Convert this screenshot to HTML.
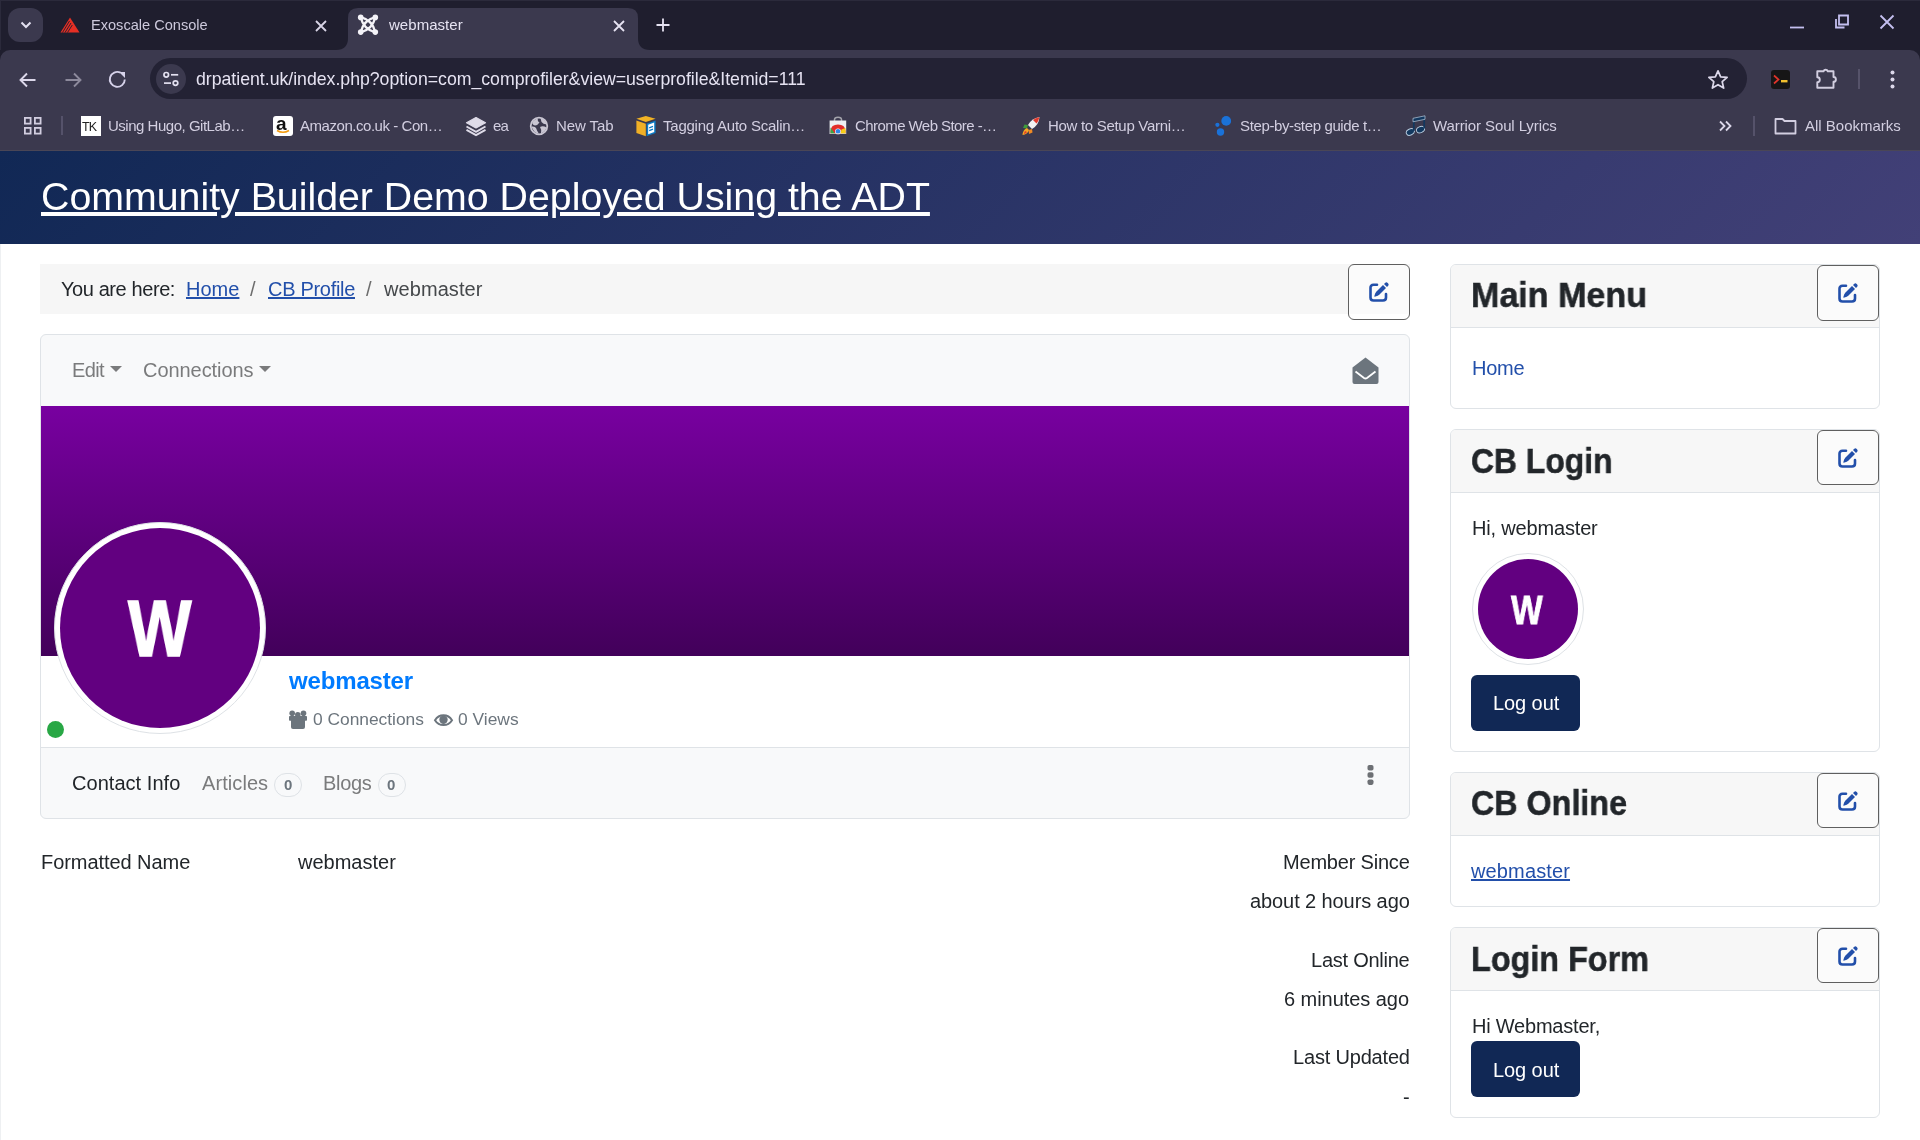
<!DOCTYPE html>
<html><head><meta charset="utf-8"><style>
html,body{margin:0;padding:0;width:1920px;height:1140px;overflow:hidden;background:#fff;}
body{position:relative;font-family:"Liberation Sans",sans-serif;}
.a{position:absolute;}
.t{position:absolute;line-height:1;white-space:pre;will-change:transform;}
svg{display:block;}
</style></head><body>
<div class="a" style="left:0px;top:0px;width:1920px;height:60px;background:#1f1e2e;"></div>
<div class="a" style="left:0px;top:50px;width:1920px;height:100px;background:#3b394e;border-radius:10px 10px 0 0;"></div>
<div class="a" style="left:0px;top:150px;width:1920px;height:1px;background:#4a4656;"></div>
<div class="a" style="left:8px;top:8px;width:35px;height:34px;background:#3b394e;border-radius:12px;"></div>
<div class="a" style="left:0px;top:0px;width:1920px;height:1px;background:#2b2a3b;"></div>
<div class="a" style="left:0px;top:0px;width:1px;height:50px;background:#2b2a3b;"></div>
<svg class="a" style="left:19px;top:19px" width="14" height="12" viewBox="0 0 14 12"><path d="M2.5 3.5 L7 8 L11.5 3.5" fill="none" stroke="#e3e0f0" stroke-width="2"/></svg>
<svg class="a" style="left:336px;top:7px" width="314" height="43" viewBox="0 0 314 43">
<path d="M0 43 Q12 43 12 31 L12 11 Q12 1 22 1 L292 1 Q302 1 302 11 L302 31 Q302 43 314 43 Z" fill="#3b394e"/></svg>
<svg class="a" style="left:60px;top:17px" width="20" height="16" viewBox="0 0 20 16">
<path d="M10 0.5 L19.5 15.5 L0.5 15.5 Z" fill="#e52f24"/>
<path d="M2.5 15.5 L9.5 4 M5 15.5 L11 6 M7.5 15.5 L12.3 8" stroke="#1f1e2e" stroke-width="0.9"/></svg>
<div class="t " style="left:90.50px;top:17.64px;font-size:14.6px;color:#cdc9dc;letter-spacing:-0.010px;">Exoscale Console</div>
<svg class="a" style="left:314px;top:19px" width="14" height="14" viewBox="0 0 14 14"><path d="M2 2 L12 12 M12 2 L2 12" stroke="#d8d4e6" stroke-width="1.8"/></svg>
<svg class="a" style="left:355px;top:13px" width="26" height="24" viewBox="0 0 26 24"><g fill="none" stroke="#f4f3f8" stroke-width="2.3"><path d="M5.7 4.2 Q17.6 7.3 20.3 19.3 M5.7 4.2 Q8.4 16.2 20.3 19.3 M20.3 4.2 Q17.6 16.2 5.7 19.3 M20.3 4.2 Q8.4 7.3 5.7 19.3"/></g><g fill="#f4f3f8"><circle cx="5.7" cy="4.4" r="2.8"/><circle cx="20.3" cy="4.4" r="2.8"/><circle cx="5.7" cy="19.1" r="2.8"/><circle cx="20.3" cy="19.1" r="2.8"/></g></svg>
<div class="t " style="left:388.50px;top:17.30px;font-size:15px;color:#e6e3f2;letter-spacing:0.038px;">webmaster</div>
<svg class="a" style="left:612px;top:19px" width="14" height="14" viewBox="0 0 14 14"><path d="M2 2 L12 12 M12 2 L2 12" stroke="#e6e3f2" stroke-width="1.8"/></svg>
<svg class="a" style="left:655px;top:17px" width="16" height="16" viewBox="0 0 16 16"><path d="M8 1.5 V14.5 M1.5 8 H14.5" stroke="#e6e3f2" stroke-width="1.8"/></svg>
<svg class="a" style="left:1786px;top:10px" width="114" height="24" viewBox="0 0 114 24"><path d="M4 17.5 H18" stroke="#c4bff0" stroke-width="1.8"/><path d="M50 9 V17.5 H58.5 M53 5.5 H62 V14.5 H53 Z" fill="none" stroke="#c4bff0" stroke-width="1.8"/><path d="M94.5 5.5 L107.5 18.5 M107.5 5.5 L94.5 18.5" stroke="#c4bff0" stroke-width="1.8"/></svg>
<svg class="a" style="left:17px;top:69px" width="22" height="22" viewBox="0 0 22 22"><path d="M18.5 11 H4 M10 4.5 L3.5 11 L10 17.5" fill="none" stroke="#dcd8ea" stroke-width="1.9"/></svg>
<svg class="a" style="left:62px;top:69px" width="22" height="22" viewBox="0 0 22 22"><path d="M3.5 11 H18 M12 4.5 L18.5 11 L12 17.5" fill="none" stroke="#8d8a9c" stroke-width="1.9"/></svg>
<svg class="a" style="left:106px;top:68px" width="22" height="22" viewBox="0 0 22 22"><path d="M18.8 11.5 A7.5 7.5 0 1 1 14.5 4.6" fill="none" stroke="#d6d2ea" stroke-width="1.9"/><path d="M13 4 H19 V10 Z" fill="#d6d2ea"/></svg>
<div class="a" style="left:150px;top:58px;width:1597px;height:41px;background:#232234;border-radius:21px;"></div>
<div class="a" style="left:156px;top:64px;width:30px;height:30px;border-radius:15px;background:#3b394e"></div>
<svg class="a" style="left:161px;top:69px" width="20" height="20" viewBox="0 0 20 20"><g fill="none" stroke="#e3e0f0" stroke-width="1.7"><circle cx="5.25" cy="5.8" r="2.3"/><path d="M10 5.8 H17.2"/><circle cx="14.5" cy="14.1" r="2.3"/><path d="M3 14.1 H10"/></g></svg>
<div class="t " style="left:196.00px;top:70.72px;font-size:17.7px;color:#e6e3f2;letter-spacing:-0.012px;">drpatient.uk/index.php?option=com_comprofiler&amp;view=userprofile&amp;Itemid=111</div>
<svg class="a" style="left:1707px;top:69px" width="22" height="21" viewBox="0 0 24 23"><path d="M12 2 L14.9 8.6 L22 9.2 L16.6 13.9 L18.2 20.9 L12 17.2 L5.8 20.9 L7.4 13.9 L2 9.2 L9.1 8.6 Z" fill="none" stroke="#dcd8ea" stroke-width="1.9" stroke-linejoin="round"/></svg>
<div class="a" style="left:1771px;top:70px;width:19px;height:19px;border-radius:3px;background:#161616;"></div>
<svg class="a" style="left:1771px;top:70px" width="19" height="19" viewBox="0 0 19 19"><path d="M3 5.5 L7.5 9.5 L3 13.5" fill="none" stroke="#e0342a" stroke-width="1.7"/><path d="M10 11.2 H16.5" stroke="#f2c12e" stroke-width="2.4"/></svg>
<svg class="a" style="left:1814px;top:66px" width="26" height="24" viewBox="0 0 26 24"><path d="M3.3 5.3 H9.5 A2.3 2.3 0 0 1 13.8 5.3 H19.5 V11 A2.3 2.3 0 0 1 19.5 15.8 V21.8 H3.3 V16.3 A2.4 2.4 0 0 0 3.3 11.3 Z" fill="none" stroke="#d2cee0" stroke-width="1.9" stroke-linejoin="round"/></svg>
<div class="a" style="left:1858px;top:69px;width:2px;height:20px;background:#56536a;"></div>
<svg class="a" style="left:1888px;top:69px" width="9" height="21" viewBox="0 0 9 21"><circle cx="4.5" cy="3.5" r="2" fill="#dcd8ea"/><circle cx="4.5" cy="10.5" r="2" fill="#dcd8ea"/><circle cx="4.5" cy="17.5" r="2" fill="#dcd8ea"/></svg>
<svg class="a" style="left:23.7px;top:116.6px" width="18" height="18" viewBox="0 0 18 18"><g fill="none" stroke="#d2cee0" stroke-width="1.8"><rect x="0.9" y="0.9" width="5.7" height="5.7"/><rect x="10.9" y="0.9" width="5.7" height="5.7"/><rect x="0.9" y="10.9" width="5.7" height="5.7"/><rect x="10.9" y="10.9" width="5.7" height="5.7"/></g></svg>
<div class="a" style="left:61px;top:116px;width:2px;height:19px;background:#55526a;"></div>
<div class="a" style="left:81px;top:116px;width:20px;height:20px;background:#fff;"></div>
<div class="t " style="left:82.00px;top:121.42px;font-size:12.5px;color:#222;letter-spacing:-1px;">TK</div>
<div class="t " style="left:108.30px;top:117.50px;font-size:15px;color:#d2cee0;letter-spacing:-0.485px;">Using Hugo, GitLab…</div>
<div class="a" style="left:273px;top:116px;width:20px;height:20px;background:#fff;border-radius:3px;"></div>
<div class="t " style="left:275.80px;top:113.92px;font-size:19px;color:#111;font-weight:700;">a</div>
<svg class="a" style="left:274px;top:129px" width="18" height="6" viewBox="0 0 18 6"><path d="M3 1.5 Q9 5 15 1.5" fill="none" stroke="#f39c12" stroke-width="1.6"/></svg>
<div class="t " style="left:300.00px;top:117.50px;font-size:15px;color:#d2cee0;letter-spacing:-0.458px;">Amazon.co.uk - Con…</div>
<svg class="a" style="left:465px;top:116px" width="22" height="21" viewBox="0 0 22 21"><path d="M11 1.5 L20.5 6.8 L11 12 L1.5 6.8 Z" fill="#dedbe8" stroke="#dedbe8" stroke-width="1.2" stroke-linejoin="round"/><g fill="none" stroke="#dedbe8" stroke-width="1.9" stroke-linejoin="round"><path d="M1.5 10.5 L11 15.8 L20.5 10.5"/><path d="M1.5 13.8 L11 19.2 L20.5 13.8"/></g></svg>
<div class="t " style="left:493.00px;top:117.50px;font-size:15px;color:#d2cee0;letter-spacing:-0.893px;">ea</div>
<svg class="a" style="left:529px;top:116px" width="20" height="20" viewBox="0 0 20 20"><circle cx="10" cy="10" r="8.3" fill="none" stroke="#c9c6d3" stroke-width="1.8"/><path d="M3 7 Q5 3 9 2.5 Q8 5 10.5 6.5 Q9 9 6 9.5 Q4 9 3 7Z M11 11 Q14 9.5 17.5 11.5 Q16 16 12 17.5 Q13 14 11 11Z" fill="#c9c6d3"/><path d="M2.5 10.5 Q6 10 7 12 Q8 15 10 17.8 Q4.5 17 2.5 10.5Z M11.5 2.3 Q16 3 17.7 8.5 Q14 8 12.5 6 Q12 4 11.5 2.3Z" fill="#c9c6d3"/></svg>
<div class="t " style="left:556.00px;top:117.50px;font-size:15px;color:#d2cee0;letter-spacing:-0.070px;">New Tab</div>
<svg class="a" style="left:630px;top:111px" width="30" height="30" viewBox="630 111 30 30"><path d="M636.4 118.7 L645.8 115.9 L655.6 118.7 L645.8 121.9Z" fill="#f2b324"/><path d="M636.4 120.5 L645.8 123.8 L645.8 136.3 L636.4 133Z" fill="#f0b026"/><path d="M646.6 123.8 L655.6 120.5 L655.6 133 L646.6 136.3Z" fill="#0b7cc6"/><path d="M648.2 124.8 L654.2 122.6 L654.2 132 L648.2 134.3Z" fill="#fff"/><path d="M649.2 127.8 L653 126.3 M649.2 130.7 L653 129.2" stroke="#0b7cc6" stroke-width="1.3"/></svg>
<div class="t " style="left:662.80px;top:117.50px;font-size:15px;color:#d2cee0;letter-spacing:-0.233px;">Tagging Auto Scalin…</div>
<svg class="a" style="left:826px;top:114px" width="24" height="24" viewBox="826 114 24 24"><path d="M834.5 121 V119.5 Q834.5 117.2 838 117.2 Q841.5 117.2 841.5 119.5 V121" fill="none" stroke="#a3a3ab" stroke-width="1.5"/><rect x="829.6" y="120.5" width="16.6" height="13.2" fill="#eef0f2"/><path d="M830.5 133.7 L830.5 131 Q831 124.6 838 124.6 Q845 124.6 845.5 131 L845.5 133.7Z" fill="#e2302a"/><path d="M830.5 133.7 V127.5 L835 133.7Z" fill="#3aa845"/><path d="M845.5 133.7 V128 L841.5 129.5 L840.5 133.7Z" fill="#f6cf16"/><circle cx="838" cy="131.4" r="2.9" fill="#fff"/><circle cx="838" cy="131.4" r="2.3" fill="#2f86e8"/><rect x="829.6" y="133.2" width="16.6" height="0.6" fill="#ddd"/></svg>
<div class="t " style="left:855.20px;top:117.50px;font-size:15px;color:#d2cee0;letter-spacing:-0.567px;">Chrome Web Store -…</div>
<svg class="a" style="left:1021px;top:116px" width="20" height="20" viewBox="0 0 20 20"><path d="M18.5 1 Q11 2 7 9 L11 13 Q18 9 18.5 1Z" fill="#f2f2f2"/><path d="M18.5 1 Q14.5 1.8 12 4 L15.5 7.5 Q17.8 5 18.5 1Z" fill="#e23b2e"/><path d="M7 9 L3.5 8.5 L2 12 L6 12.5 Z" fill="#3f9b3a"/><path d="M11 13 L11.5 16.5 L8 18 L7.5 14Z" fill="#f08a24"/><path d="M6 12 Q2 13.5 1.5 19 Q6.5 18.5 8 14Z" fill="#f5a623"/><path d="M4 15 Q3 17 3 18 Q5 17.5 6 16Z" fill="#e23b2e"/></svg>
<div class="t " style="left:1047.70px;top:117.50px;font-size:15px;color:#d2cee0;letter-spacing:-0.301px;">How to Setup Varni…</div>
<svg class="a" style="left:1212px;top:113px" width="24" height="24" viewBox="0 0 24 24"><circle cx="14.2" cy="7.9" r="4.9" fill="#1a72d9"/><circle cx="5.4" cy="11.8" r="2.1" fill="#1a72d9"/><circle cx="8.5" cy="19" r="3.7" fill="#1a72d9"/></svg>
<div class="t " style="left:1240.00px;top:117.50px;font-size:15px;color:#d2cee0;letter-spacing:-0.369px;">Step-by-step guide t…</div>
<svg class="a" style="left:1400px;top:111px" width="30" height="26" viewBox="1400 111 30 26"><g stroke="#b9cde0" stroke-width="0.9"><ellipse cx="1410.3" cy="132" rx="4.2" ry="3" transform="rotate(-25 1410.3 132)" fill="#12385f"/><ellipse cx="1420.5" cy="129.6" rx="4.2" ry="3" transform="rotate(-25 1420.5 129.6)" fill="#12385f"/></g><g fill="none" stroke="#12385f" stroke-width="1.7"><path d="M1413.8 131 V119 M1424.2 128.5 V116.8"/></g><path d="M1413 118.3 L1425 115.8 L1425 119.3 L1413 121.8Z" fill="#12385f" stroke="#b9cde0" stroke-width="0.7"/></svg>
<div class="t " style="left:1433.00px;top:117.50px;font-size:15px;color:#d2cee0;letter-spacing:-0.099px;">Warrior Soul Lyrics</div>
<svg class="a" style="left:1717px;top:119px" width="16" height="14" viewBox="0 0 16 14"><path d="M3 2.5 L7.5 7 L3 11.5 M9 2.5 L13.5 7 L9 11.5" fill="none" stroke="#dcd8ea" stroke-width="1.8"/></svg>
<div class="a" style="left:1753px;top:116px;width:2px;height:20px;background:#55526a;"></div>
<svg class="a" style="left:1774px;top:117px" width="23" height="18" viewBox="0 0 23 18"><path d="M1.5 2 H8.5 L10.5 4 H21.5 V16.5 H1.5 Z" fill="none" stroke="#d2cee0" stroke-width="1.8" stroke-linejoin="round"/></svg>
<div class="t " style="left:1805.30px;top:117.50px;font-size:15px;color:#d2cee0;">All Bookmarks</div>
<div class="a" style="left:0px;top:151px;width:1920px;height:989px;background:#fff;"></div>
<div class="a" style="left:0px;top:244px;width:1px;height:896px;background:#eef0f2;"></div>
<div class="a" style="left:0px;top:151px;width:1920px;height:93px;background:linear-gradient(135deg,#112855 0%,#424077 100%);"></div>
<div class="t " style="left:41.00px;top:177.03px;font-size:39.3px;color:#fff;text-decoration:underline;text-decoration-thickness:3.5px;text-underline-offset:2px;">Community Builder Demo Deployed Using the ADT</div>
<div class="a" style="left:40px;top:264px;width:1370px;height:50px;background:#f6f6f6;"></div>
<div class="t " style="left:60.50px;top:279.47px;font-size:20px;color:#22262a;letter-spacing:-0.412px;">You are here:</div>
<div class="t " style="left:185.50px;top:279.47px;font-size:20px;color:#224faa;letter-spacing:0.012px;text-decoration:underline;text-decoration-thickness:2px;text-underline-offset:1px;">Home</div>
<div class="t " style="left:249.50px;top:279.47px;font-size:20px;color:#6d6d6d;">/</div>
<div class="t " style="left:267.50px;top:279.47px;font-size:20px;color:#224faa;letter-spacing:-0.303px;text-decoration:underline;text-decoration-thickness:2px;text-underline-offset:1px;">CB Profile</div>
<div class="t " style="left:366.00px;top:279.47px;font-size:20px;color:#6d6d6d;">/</div>
<div class="t " style="left:383.50px;top:279.47px;font-size:20px;color:#45484b;letter-spacing:0.076px;">webmaster</div>
<div class="a" style="left:1348px;top:264px;width:62px;height:56px;background:rgba(255,255,255,0.55);border:1.3px solid #5f5f5f;border-radius:6px;box-sizing:border-box;"></div>
<svg class="a" style="left:1368.0px;top:281.0px" width="22" height="22" viewBox="0 0 22 22"><path d="M9 3.8 H5.5 Q2.5 3.8 2.5 6.8 V16.5 Q2.5 19.5 5.5 19.5 H15 Q18 19.5 18 16.5 V13" fill="none" stroke="#224faa" stroke-width="2.6" stroke-linecap="round"/><path d="M17.3 1.8 Q18.5 0.8 19.7 2 L20.2 2.5 Q21.2 3.7 20.2 4.8 L19 6 L16 3 Z" fill="#224faa"/><path d="M15 4 L18 7 L11.5 13.5 Q10 15 7.5 15.5 L6.3 15.7 L6.5 14.5 Q7 12 8.5 10.5 Z" fill="#224faa"/></svg>
<div class="a" style="left:40px;top:334px;width:1370px;height:485px;background:#f8f9fa;border:1px solid #dfe3e7;border-radius:6px;box-sizing:border-box;"></div>
<div class="t " style="left:72.00px;top:360.07px;font-size:20px;color:#7a7b7c;letter-spacing:-0.616px;">Edit</div>
<svg class="a" style="left:110px;top:366px" width="12" height="6" viewBox="0 0 12 6"><path d="M0 0 H12 L6 6Z" fill="#7a7b7c"/></svg>
<div class="t " style="left:142.50px;top:360.07px;font-size:20px;color:#7a7b7c;letter-spacing:-0.062px;">Connections</div>
<svg class="a" style="left:259px;top:366px" width="12" height="6" viewBox="0 0 12 6"><path d="M0 0 H12 L6 6Z" fill="#7a7b7c"/></svg>
<svg class="a" style="left:1351px;top:356px" width="29" height="29" viewBox="0 0 29 29"><path d="M14.5 1.5 L27.5 11.5 V26 Q27.5 28 25.5 28 H3.5 Q1.5 28 1.5 26 V11.5 Z" fill="#6c757d"/><path d="M4.5 15.5 L13 22 Q14.5 23 16 22 L24.5 15.5" fill="none" stroke="#fff" stroke-width="1.8"/></svg>
<div class="a" style="left:41px;top:406px;width:1368px;height:250px;background:linear-gradient(180deg,#7800a0 0%,#42005a 100%);"></div>
<div class="a" style="left:41px;top:656px;width:1368px;height:91px;background:#fff;"></div>
<div class="a" style="left:41px;top:747px;width:1368px;height:1px;background:#dfe3e7;"></div>
<div class="a" style="left:54px;top:522px;width:212px;height:212px;border-radius:50%;background:#fff;border:1px solid #dee2e6;box-sizing:border-box;"></div>
<div class="a" style="left:60px;top:528px;width:200px;height:200px;border-radius:50%;background:#620080;"></div>
<div class="t " style="left:127.80px;top:589.28px;font-size:80px;color:#fff;font-weight:700;transform:scaleX(0.84);transform-origin:0 0;-webkit-text-stroke:1.6px #fff;">W</div>
<div class="a" style="left:47.2px;top:721.2px;width:17.3px;height:17.3px;border-radius:50%;background:#28a745;"></div>
<div class="t " style="left:289.00px;top:668.68px;font-size:24px;color:#007bff;font-weight:700;letter-spacing:-0.155px;">webmaster</div>
<svg class="a" style="left:288px;top:710px" width="20" height="20" viewBox="0 0 20 20"><g fill="#6c757d"><circle cx="4.2" cy="3.2" r="2.8"/><circle cx="15.5" cy="3.2" r="2.8"/><circle cx="9.8" cy="4.8" r="2.8"/><rect x="1" y="6" width="18" height="4.8" rx="0.8"/><path d="M3 8 H17 L17 17 Q17 19 15 19 H5 Q3 19 3 17 Z"/></g></svg>
<div class="t " style="left:313.00px;top:710.77px;font-size:17.4px;color:#6c757d;letter-spacing:-0.019px;">0 Connections</div>
<svg class="a" style="left:433px;top:712px" width="21" height="16" viewBox="0 0 21 16"><path d="M10.5 3.2 Q16 3.2 19 8.2 Q16 13.1 10.5 13.1 Q5 13.1 2 8.2 Q5 3.2 10.5 3.2Z" fill="none" stroke="#6c757d" stroke-width="2"/><circle cx="10.5" cy="7.8" r="4.2" fill="#6c757d"/></svg>
<div class="t " style="left:458.00px;top:710.77px;font-size:17.4px;color:#6c757d;">0 Views</div>
<div class="t " style="left:72.00px;top:773.07px;font-size:20px;color:#212529;letter-spacing:0.038px;">Contact Info</div>
<div class="t " style="left:201.50px;top:773.07px;font-size:20px;color:#7a7b7c;letter-spacing:0.079px;">Articles</div>
<div class="a" style="left:274px;top:773px;width:28px;height:24px;border-radius:12px;border:1px solid #dee2e6;box-sizing:border-box;background:#f8f9fa;"></div>
<div class="t " style="left:283.50px;top:777.10px;font-size:15px;color:#6c757d;font-weight:700;">0</div>
<div class="t " style="left:322.90px;top:773.07px;font-size:20px;color:#7a7b7c;letter-spacing:-0.326px;">Blogs</div>
<div class="a" style="left:377.5px;top:773px;width:28px;height:24px;border-radius:12px;border:1px solid #dee2e6;box-sizing:border-box;background:#f8f9fa;"></div>
<div class="t " style="left:387.00px;top:777.10px;font-size:15px;color:#6c757d;font-weight:700;">0</div>
<svg class="a" style="left:1367px;top:764px" width="7" height="22" viewBox="0 0 7 22"><g fill="#6d7074"><rect x="0.5" y="1" width="6" height="5.5" rx="1.8"/><rect x="0.5" y="8.2" width="6" height="5.5" rx="1.8"/><rect x="0.5" y="15.4" width="6" height="5.5" rx="1.8"/></g></svg>
<div class="t " style="left:41.00px;top:851.82px;font-size:20px;color:#22262a;letter-spacing:-0.061px;">Formatted Name</div>
<div class="t " style="left:297.70px;top:851.82px;font-size:20px;color:#22262a;">webmaster</div>
<div class="t " style="right:510.70px;top:852.07px;font-size:20px;color:#22262a;letter-spacing:-0.195px;">Member Since</div>
<div class="t " style="right:510.59px;top:890.67px;font-size:20px;color:#22262a;letter-spacing:-0.091px;">about 2 hours ago</div>
<div class="t " style="right:510.74px;top:949.57px;font-size:20px;color:#22262a;letter-spacing:-0.243px;">Last Online</div>
<div class="t " style="right:510.55px;top:988.87px;font-size:20px;color:#22262a;letter-spacing:-0.049px;">6 minutes ago</div>
<div class="t " style="right:510.68px;top:1046.67px;font-size:20px;color:#22262a;letter-spacing:-0.181px;">Last Updated</div>
<div class="t " style="right:510.50px;top:1086.57px;font-size:20px;color:#22262a;">-</div>
<div class="a" style="left:1450px;top:264px;width:430px;height:145px;background:#fff;border:1px solid #dfe3e7;border-radius:6px;box-sizing:border-box;"></div>
<div class="a" style="left:1451px;top:265px;width:428px;height:62px;background:#f7f7f7;border-radius:5px 5px 0 0;"></div>
<div class="a" style="left:1451px;top:327px;width:428px;height:1px;background:#dfe3e7;"></div>
<div class="t " style="left:1471.00px;top:277.17px;font-size:35px;color:#22262a;font-weight:700;-webkit-text-stroke:0.5px #22262a;transform:scaleX(0.9733);transform-origin:0 0;">Main Menu</div>
<div class="a" style="left:1817px;top:265px;width:62px;height:56px;background:rgba(255,255,255,0.55);border:1.3px solid #5f5f5f;border-radius:6px;box-sizing:border-box;"></div>
<svg class="a" style="left:1837.0px;top:282.0px" width="22" height="22" viewBox="0 0 22 22"><path d="M9 3.8 H5.5 Q2.5 3.8 2.5 6.8 V16.5 Q2.5 19.5 5.5 19.5 H15 Q18 19.5 18 16.5 V13" fill="none" stroke="#224faa" stroke-width="2.6" stroke-linecap="round"/><path d="M17.3 1.8 Q18.5 0.8 19.7 2 L20.2 2.5 Q21.2 3.7 20.2 4.8 L19 6 L16 3 Z" fill="#224faa"/><path d="M15 4 L18 7 L11.5 13.5 Q10 15 7.5 15.5 L6.3 15.7 L6.5 14.5 Q7 12 8.5 10.5 Z" fill="#224faa"/></svg>
<div class="t " style="left:1472.00px;top:357.97px;font-size:20px;color:#224faa;letter-spacing:-0.263px;">Home</div>
<div class="a" style="left:1450px;top:429px;width:430px;height:323px;background:#fff;border:1px solid #dfe3e7;border-radius:6px;box-sizing:border-box;"></div>
<div class="a" style="left:1451px;top:430px;width:428px;height:62px;background:#f7f7f7;border-radius:5px 5px 0 0;"></div>
<div class="a" style="left:1451px;top:492px;width:428px;height:1px;background:#dfe3e7;"></div>
<div class="t " style="left:1471.00px;top:442.57px;font-size:35px;color:#22262a;font-weight:700;-webkit-text-stroke:0.5px #22262a;transform:scaleX(0.9098);transform-origin:0 0;">CB Login</div>
<div class="a" style="left:1817px;top:430px;width:62px;height:55px;background:rgba(255,255,255,0.55);border:1.3px solid #5f5f5f;border-radius:6px;box-sizing:border-box;"></div>
<svg class="a" style="left:1837.0px;top:446.5px" width="22" height="22" viewBox="0 0 22 22"><path d="M9 3.8 H5.5 Q2.5 3.8 2.5 6.8 V16.5 Q2.5 19.5 5.5 19.5 H15 Q18 19.5 18 16.5 V13" fill="none" stroke="#224faa" stroke-width="2.6" stroke-linecap="round"/><path d="M17.3 1.8 Q18.5 0.8 19.7 2 L20.2 2.5 Q21.2 3.7 20.2 4.8 L19 6 L16 3 Z" fill="#224faa"/><path d="M15 4 L18 7 L11.5 13.5 Q10 15 7.5 15.5 L6.3 15.7 L6.5 14.5 Q7 12 8.5 10.5 Z" fill="#224faa"/></svg>
<div class="t " style="left:1472.00px;top:518.27px;font-size:20px;color:#22262a;letter-spacing:-0.170px;">Hi, webmaster</div>
<div class="a" style="left:1471.5px;top:553px;width:112px;height:112px;border-radius:50%;background:#fff;border:1px solid #dee2e6;box-sizing:border-box;"></div>
<div class="a" style="left:1477.5px;top:559px;width:100px;height:100px;border-radius:50%;background:#620080;"></div>
<div class="t " style="left:1511.00px;top:589.92px;font-size:40.5px;color:#fff;font-weight:700;transform:scaleX(0.83);transform-origin:0 0;-webkit-text-stroke:0.8px #fff;">W</div>
<div class="a" style="left:1471px;top:675px;width:109px;height:56px;background:#112855;border-radius:6px;"></div>
<div class="t " style="left:1492.50px;top:693.07px;font-size:20px;color:#fff;letter-spacing:-0.076px;">Log out</div>
<div class="a" style="left:1450px;top:772px;width:430px;height:135px;background:#fff;border:1px solid #dfe3e7;border-radius:6px;box-sizing:border-box;"></div>
<div class="a" style="left:1451px;top:773px;width:428px;height:62px;background:#f7f7f7;border-radius:5px 5px 0 0;"></div>
<div class="a" style="left:1451px;top:835px;width:428px;height:1px;background:#dfe3e7;"></div>
<div class="t " style="left:1471.00px;top:785.37px;font-size:35px;color:#22262a;font-weight:700;-webkit-text-stroke:0.5px #22262a;transform:scaleX(0.9221);transform-origin:0 0;">CB Online</div>
<div class="a" style="left:1817px;top:773px;width:62px;height:55px;background:rgba(255,255,255,0.55);border:1.3px solid #5f5f5f;border-radius:6px;box-sizing:border-box;"></div>
<svg class="a" style="left:1837.0px;top:789.5px" width="22" height="22" viewBox="0 0 22 22"><path d="M9 3.8 H5.5 Q2.5 3.8 2.5 6.8 V16.5 Q2.5 19.5 5.5 19.5 H15 Q18 19.5 18 16.5 V13" fill="none" stroke="#224faa" stroke-width="2.6" stroke-linecap="round"/><path d="M17.3 1.8 Q18.5 0.8 19.7 2 L20.2 2.5 Q21.2 3.7 20.2 4.8 L19 6 L16 3 Z" fill="#224faa"/><path d="M15 4 L18 7 L11.5 13.5 Q10 15 7.5 15.5 L6.3 15.7 L6.5 14.5 Q7 12 8.5 10.5 Z" fill="#224faa"/></svg>
<div class="t " style="left:1471.20px;top:860.67px;font-size:20px;color:#224faa;letter-spacing:0.132px;text-decoration:underline;text-decoration-thickness:2px;text-underline-offset:1px;">webmaster</div>
<div class="a" style="left:1450px;top:927px;width:430px;height:191px;background:#fff;border:1px solid #dfe3e7;border-radius:6px;box-sizing:border-box;"></div>
<div class="a" style="left:1451px;top:928px;width:428px;height:62px;background:#f7f7f7;border-radius:5px 5px 0 0;"></div>
<div class="a" style="left:1451px;top:990px;width:428px;height:1px;background:#dfe3e7;"></div>
<div class="t " style="left:1471.00px;top:940.67px;font-size:35px;color:#22262a;font-weight:700;-webkit-text-stroke:0.5px #22262a;transform:scaleX(0.9248);transform-origin:0 0;">Login Form</div>
<div class="a" style="left:1817px;top:928px;width:62px;height:55px;background:rgba(255,255,255,0.55);border:1.3px solid #5f5f5f;border-radius:6px;box-sizing:border-box;"></div>
<svg class="a" style="left:1837.0px;top:944.5px" width="22" height="22" viewBox="0 0 22 22"><path d="M9 3.8 H5.5 Q2.5 3.8 2.5 6.8 V16.5 Q2.5 19.5 5.5 19.5 H15 Q18 19.5 18 16.5 V13" fill="none" stroke="#224faa" stroke-width="2.6" stroke-linecap="round"/><path d="M17.3 1.8 Q18.5 0.8 19.7 2 L20.2 2.5 Q21.2 3.7 20.2 4.8 L19 6 L16 3 Z" fill="#224faa"/><path d="M15 4 L18 7 L11.5 13.5 Q10 15 7.5 15.5 L6.3 15.7 L6.5 14.5 Q7 12 8.5 10.5 Z" fill="#224faa"/></svg>
<div class="t " style="left:1472.00px;top:1016.07px;font-size:20px;color:#22262a;letter-spacing:-0.214px;">Hi Webmaster,</div>
<div class="a" style="left:1471px;top:1041px;width:109px;height:56px;background:#112855;border-radius:6px;"></div>
<div class="t " style="left:1492.50px;top:1059.57px;font-size:20px;color:#fff;letter-spacing:-0.076px;">Log out</div>
</body></html>
